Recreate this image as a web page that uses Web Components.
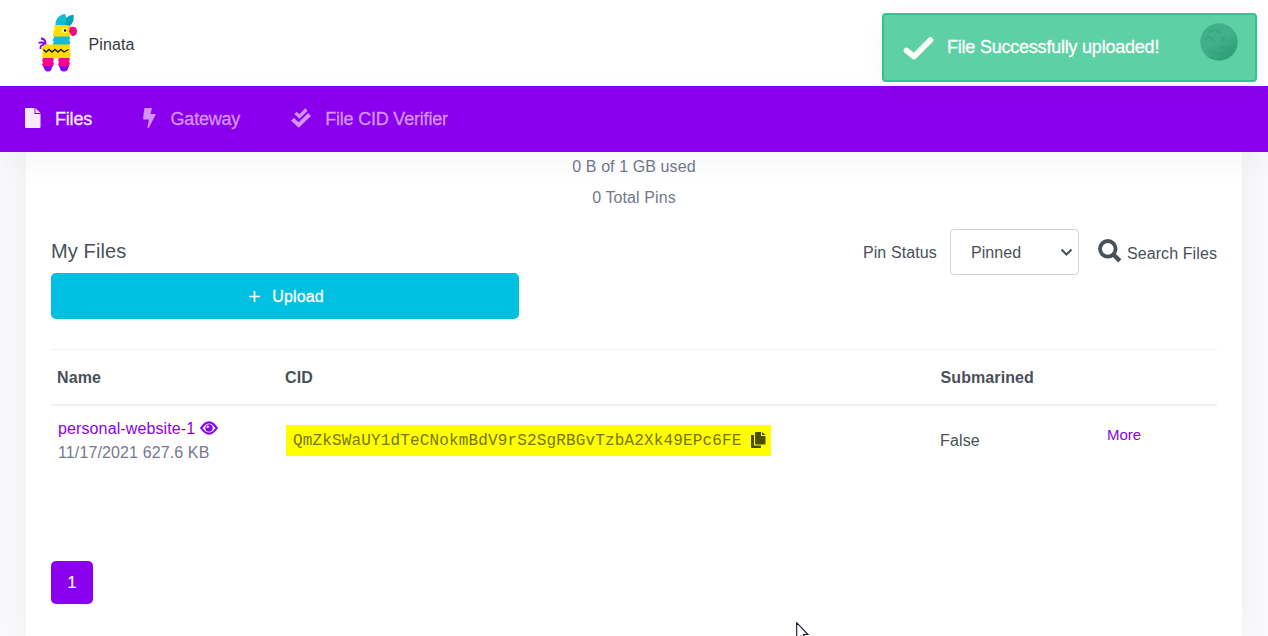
<!DOCTYPE html>
<html lang="en"><head><meta charset="utf-8"><title>Pinata</title>
<style>
html,body{margin:0;height:100%;overflow:hidden}
body{font:16px/24px "Liberation Sans",Arial,sans-serif;color:#495057;background:#f9f9fb;letter-spacing:.1px}
</style></head><body>
<pin-app></pin-app>
<script>
const define=(name,html)=>customElements.define(name,class extends HTMLElement{
  constructor(){super();this.attachShadow({mode:'open'}).innerHTML=html}
});

define('pinata-logo',`<style>:host{display:block;width:40px;height:60px}svg{display:block}</style>
<svg width="40" height="60" viewBox="0 0 40 60">
<path d="M6.500 36Q9.500 26 3 25.500M6.500 32Q5 28 .5 30M6.500 32.500Q2 31 2.500 36" fill="none" stroke="#8a00ee" stroke-width="1.900"/>
<path d="M24 13Q26 3 35.500 1.500Q37 9 31 14Z" fill="#00a3b8"/>
<path d="M17.500 14Q16.500 3 27 .8Q30 7 26 14Z" fill="#14bed0"/>
<path d="M17 12H29L32 13 33 21 31 24H16L14.500 22 16 20 15 18 17 16 16 14Z" fill="#ffdf00"/>
<path d="M32 14Q39 12.500 39 18.500 39 23 34 23L31 18.500Z" fill="#fb008d"/><circle cx="26.500" cy="17.500" r="2.300" fill="#fff"/><circle cx="27" cy="17.500" r="1.300" fill="#111"/>
<path d="M16 23.500H31L32.500 25 31 27 32.500 29 31 33H16L14.500 31 16 29 14.500 27 16 25Z" fill="#18bad0"/>
<path d="M6 31.500H31L32.500 33 31.500 35 33 37 31.500 39 33 41 31.500 45.500H6L4 44 5 42 3.500 40 5 38 3.500 36 5 34Z" fill="#ffdb00"/>
<path d="M5.500 36.500 8 39 11 36.500 14 39 17 36.500 20 39 23 36.500 26 39 30.500 36.500" fill="none" stroke="#181c20" stroke-width="1.400"/>
<path d="M5 45H15L16 46.500 15 48.500 16 50.500 14.500 54H5.500L4 51.500 5 49.500 4 47.500ZM21 45H31L32 46.500 31 48.500 32 50.500 30.500 54H21.500L20 51.500 21 49.500 20 47.500Z" fill="#fa0095"/>
<path d="M5.500 53H14Q14 58.500 10 58.500T5.500 53ZM21.500 53H30.500Q30.500 58.500 26 58.500T21.500 53Z" fill="#8700f4"/></svg>`);

define('nav-item',`<style>:host{display:flex;align-items:center;color:#d493fa;font-size:18px;letter-spacing:-.2px;-webkit-text-stroke:.3px currentColor}
:host([active]){color:#f7e9ff}.i{display:flex;align-items:center;width:var(--iw,30px);margin-top:-2px}</style><span class="i"><slot name="icon"></slot></span><slot></slot>`);

define('top-nav',`<style>:host{display:flex;align-items:center;height:66px;box-sizing:border-box;padding-left:25px;background:#8a00ee;box-shadow:0 10px 30px rgba(18,20,40,.04);position:relative;z-index:2}
nav-item+nav-item{margin-left:50px}.g{--iw:28.500px}.v{--iw:35px}svg{display:block}.v svg{margin-left:1px}</style>
<nav-item active><svg slot="icon" width="16" height="20" viewBox="0 0 16 20" fill="currentColor"><path d="M1 0H9.500V6H15.500V19Q15.500 20 14.500 20H1Q0 20 0 19V1Q0 0 1 0M10.500 0 15.500 5H10.500Z"/></svg>Files</nav-item>
<nav-item class="g"><svg slot="icon" width="15" height="20" viewBox="0 0 15 20" fill="currentColor"><path d="M2.500 0H10L8.500 6H13Q14 6 13.500 7L7 19.500Q5.500 20.500 5.500 19L7 11.500H2Q1 11.500 1 10.500Z"/></svg>Gateway</nav-item>
<nav-item class="v"><svg slot="icon" width="20" height="20" viewBox="0 0 20 20" fill="none" stroke="currentColor"><path d="M4.500 4.800 8.500 8.500 15.500 1.500" stroke-width="3.200"/><path d="M1.500 11.300 7.700 17 18.500 6.500" stroke-width="4"/></svg>File CID Verifier</nav-item>`);

define('app-header',`<style>:host{display:flex;align-items:center;height:86px;padding-left:38px;background:#fff;box-sizing:border-box;color:#343a40}
pinata-logo{margin-top:-1px;margin-right:10.500px}span{padding-top:3px}</style><pinata-logo></pinata-logo><span>Pinata</span>`);

define('success-toast',`<style>:host{position:absolute;z-index:5;left:882px;top:13px;width:375px;height:69px;box-sizing:border-box;border:2px solid #34c38f;border-radius:4px;background:#5dd0a6;box-shadow:0 8px 26px rgba(18,38,63,.03);display:flex;align-items:center;padding-left:19px;color:#fff;font-size:18px}
.c{margin-top:1px}.m{margin-left:13px;letter-spacing:-.22px;-webkit-text-stroke:.3px #fff;white-space:nowrap;flex:1;padding-bottom:2px}.o{margin:-12px 17px 0 0}</style>
<svg class="c" width="31" height="25" viewBox="0 0 31 25"><path d="M3.500 14.500 11 20.500 27.500 4" fill="none" stroke="#fff" stroke-width="5.700" stroke-linecap="round" stroke-linejoin="round"/></svg><span class="m">File Successfully uploaded!</span>
<svg class="o" width="38" height="38" viewBox="0 0 38 38"><defs><linearGradient id="r" x2=".6" y2="1"><stop stop-color="#40ae87"/><stop offset=".55" stop-color="#42b08a"/><stop offset="1" stop-color="#2f9f78"/></linearGradient></defs><circle cx="19" cy="19" r="18.700" fill="url(#r)"/><g fill="none" stroke="#2e9b76" opacity=".35"><circle cx="23" cy="16" r="1.500" stroke-width="2.500"/><path d="M3 17 9 14 14 18M8 9 15 7 20 10M20 24 27 26 33 24M7 26Q20 34 32 28" stroke-width="2"/></g></svg>`);

define('upload-button',`<style>:host{display:block;width:468px}button{width:100%;height:46px;padding:0 0 0 3px;border:0;border-radius:5px;background:#00c0e1;color:#fff;font:16px "Liberation Sans",Arial,sans-serif;letter-spacing:.15px;display:flex;align-items:center;justify-content:center;gap:12px;-webkit-text-stroke:.3px #fff}span{padding-top:1px}</style>
<button><svg width="11" height="11"><path d="M5.500 0V11M0 5.500H11" stroke="#fff" stroke-width="1.700"/></svg><span>Upload</span></button>`);

define('status-select',`<style>:host{display:flex;align-items:center;justify-content:space-between;box-sizing:border-box;width:129px;height:46px;border:1px solid #ced4da;border-radius:4px;padding:0 5px 0 20px;background:#fff}span{padding-top:2px}</style>
<span><slot></slot></span><svg width="13" height="9" viewBox="0 0 13 9"><path d="M1.500 1.500 6.500 6.500 11.500 1.500" fill="none" stroke="#495057" stroke-width="2"/></svg>`);

define('file-toolbar',`<style>:host{display:flex;justify-content:space-between;align-items:flex-start;height:90px}
.h{font-size:20px;line-height:44px}.h span{display:block;height:44px;letter-spacing:.12px}.r{display:flex;align-items:center}.p{margin-right:13px;padding-top:2px}status-select{margin-right:19px}.s{margin-right:5px;margin-top:-3px;display:block}.t{padding-top:3px}</style>
<div class="h"><span>My Files</span><upload-button></upload-button></div>
<div class="r"><span class="p">Pin Status</span><status-select>Pinned</status-select><svg class="s" width="24" height="24" viewBox="0 0 24 24"><circle cx="9.800" cy="9.800" r="7.800" fill="none" stroke="#495057" stroke-width="3.800"/><path d="M15 15.200 21.800 21.800" stroke="#495057" stroke-width="4.400"/></svg><span class="t">Search Files</span></div>`);

define('cid-chip',`<style>:host{display:inline-flex;align-items:center;box-sizing:border-box;width:485px;height:31px;padding-left:7px;background:#ff0;color:#777600;font:16px "Liberation Mono",monospace;letter-spacing:.15px;white-space:nowrap}svg{margin-left:9px;margin-top:-1px}</style>
<slot></slot><svg width="15" height="16" viewBox="0 0 15 16" fill="#4b4d00"><path d="M0 3H3V13.500H10V16H1Q0 16 0 15ZM5 0H10V4H14.500V12Q14.500 12.500 13.500 12.500H5Q4 12.500 4 11.500V1Q4 0 5 0M11 0 14.500 3H11Z"/></svg>`);

define('file-table',`<style>:host{display:block;margin-top:30px;border-top:1px solid #eff2f7}
.row{display:grid;grid-template-columns:228px 655px 167px 1fr}.head{align-items:center;padding-left:6px;font-weight:700;border-bottom:2px solid #eff2f7;letter-spacing:.1px;padding-top:1px;height:53px}
.body{height:155px;padding-left:7px;box-sizing:border-box;align-items:start;grid-template-columns:228px 654px 167px 1fr}
.n{padding-top:11px;color:#74788d;letter-spacing:.12px}.n a{display:flex;align-items:center;color:#8a00ee;gap:5px}svg{margin-top:-2px}.f{padding-top:23px;letter-spacing:.15px}.s{padding-left:.500px}.m{font-size:15px;color:#8a00ee;padding-top:17px;letter-spacing:0}cid-chip{margin-top:19px}</style>
<div class="row head"><span>Name</span><span>CID</span><span class="s">Submarined</span><span></span></div>
<div class="row body"><div class="n"><a><span>personal-website-1</span><svg width="18" height="14" viewBox="0 0 18 14"><path d="M1.200 7Q9-4.300 16.800 7 9 18.300 1.200 7Z" fill="none" stroke="currentColor" stroke-width="2.200"/><circle cx="9" cy="7" r="3.700" fill="currentColor"/><circle cx="7.700" cy="5.800" r="1.200" fill="#fff"/></svg></a><span>11/17/2021 627.6 KB</span></div>
<div><cid-chip>QmZkSWaUY1dTeCNokmBdV9rS2SgRBGvTzbA2Xk49EPc6FE</cid-chip></div><span class="f">False</span><span class="m">More</span></div>`);

define('page-button',`<style>:host{display:flex;align-items:center;justify-content:center;width:42px;height:43px;border-radius:5px;background:#8a00ee;color:#fff;-webkit-text-stroke:.2px #fff}</style><slot></slot>`);

define('files-card',`<style>:host{display:block;height:484px;box-sizing:border-box;margin:0 26px;padding:0 25px;background:#fff;box-shadow:0 0 32px rgba(18,20,90,.045)}
.u{height:77px;text-align:center;color:#74788d;line-height:30px}.u div{height:31px}</style>
<div class="u"><div>0 B of 1 GB used</div><div>0 Total Pins</div></div><file-toolbar></file-toolbar><file-table></file-table><page-button>1</page-button>`);

define('mouse-pointer',`<style>:host{position:absolute;left:796px;top:622px;width:14px;height:14px;overflow:hidden;z-index:4}svg{display:block}</style><svg width="14" height="20"><path d="M.7.7V18L5 14 8 20 10 19 7.500 12.500H12Z" fill="#fff" stroke="#17152a" stroke-width="1.100"/></svg>`);

define('pin-app',`<style>:host{display:block;position:relative;width:1268px;height:636px;overflow:hidden}</style>
<app-header></app-header><top-nav></top-nav><files-card></files-card><success-toast></success-toast><mouse-pointer></mouse-pointer>`);
</script></body></html>
